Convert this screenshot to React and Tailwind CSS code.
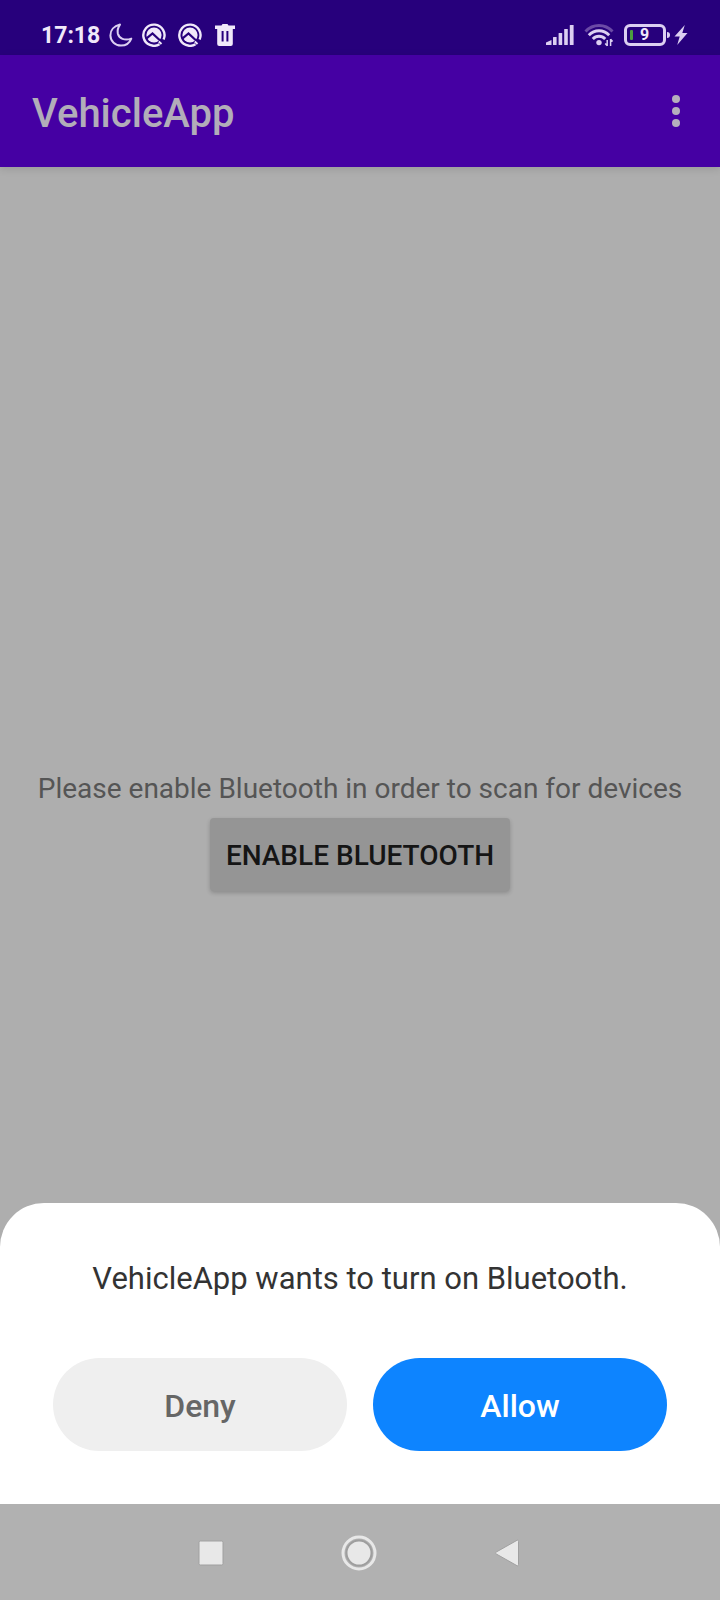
function Moon() {
  return (
    <svg viewBox="0 0 24 24" className="h-6 w-6" fill="none" stroke="#dccff2" strokeWidth="2" strokeLinejoin="round" aria-hidden="true">
      <path d="M11 1.600C4.800 3 1.300 7.500 1.400 12.500 1.600 18.500 6.200 22.600 12 22.600c4.800 0 8.600-2.600 10.300-7C15.500 18 10 15.500 8.800 10.500 8.200 7 9.200 4 11 1.600z" />
    </svg>
  );
}

function CircleBadge() {
  return (
    <svg viewBox="0 0 24 24" className="h-6 w-6" fill="none" aria-hidden="true">
      <path d="M17.500 21.200A10.600 10.600 0 1 1 21.600 16.500" stroke="#f0e8fa" strokeWidth="2.400" />
      <circle cx="12" cy="12" r="7.600" fill="#f0e8fa" />
      <path d="M4 15.800l6.500-5.300 9.500 8.700" stroke="#27007c" strokeWidth="2.200" />
      <path d="M16.800 18.500l2.700 2.500" stroke="#f0e8fa" strokeWidth="2" />
    </svg>
  );
}

function Trash() {
  return (
    <svg viewBox="0 0 22 24" className="h-6 w-[22px]" fill="#f0e8fa" aria-hidden="true">
      <path d="M1 2.500h6.500l1-1.500h5l1 1.500H21V6H1z" />
      <path fillRule="evenodd" d="M3.200 5h15.600v16a2 2 0 0 1-2 2H5.200a2 2 0 0 1-2-2zM7.600 8v10.500h2V8zM12.400 8v10.500h2V8z" />
    </svg>
  );
}

function Signal() {
  return (
    <svg viewBox="0 0 28 20" className="h-5 w-7" fill="#dccff2" aria-hidden="true">
      <path d="M0 20v-2.500L5.500 15v5z" />
      <rect x="7" y="12" width="3.600" height="8" rx="0.500" />
      <rect x="12.600" y="8" width="3.600" height="12" rx="0.500" />
      <rect x="18.200" y="4" width="3.600" height="16" rx="0.500" />
      <rect x="23.800" y="0" width="3.800" height="20" rx="0.500" />
    </svg>
  );
}

function Wifi() {
  return (
    <svg viewBox="0 0 30 24" className="h-6 w-[30px]" fill="none" strokeWidth="2.900" aria-hidden="true">
      <path d="M1.500 8.500C9 .5 21 .5 28.500 8.500" stroke="#6b4aa6" />
      <path d="M4.800 12.200c5.800-6 14.600-6 20.400 0M8.800 16c3.400-3.700 9-3.700 12.400 0" stroke="#dccff2" />
      <circle cx="15" cy="19.600" r="2.700" fill="#dccff2" />
      <path d="M23.200 17v6M26.600 16v7M21.200 20.500l2 2.300M28.600 18.500l-2-2.300" stroke="#dccff2" strokeWidth="1.500" />
    </svg>
  );
}

function Battery() {
  return (
    <div className="flex items-center gap-px">
      <div className="flex h-[22px] w-[42px] items-center rounded-md border-3 border-[#dccff2] px-[3px]">
        <span className="h-2.5 w-[3px] rounded-[1px] bg-[#4c9c3f]" />
        <span className="flex-1 pr-1 text-center text-[16px] leading-4 font-bold text-[#f0e8fa]">9</span>
      </div>
      <span className="h-1.5 w-[3px] rounded-r-sm bg-[#dccff2]" />
    </div>
  );
}

function Bolt() {
  return (
    <svg viewBox="0 0 14 20" className="h-5 w-3.5" fill="#dccff2" aria-hidden="true">
      <path d="M10.800 0L.5 11.600h5.200L3.200 20 13.500 8H8.300z" />
    </svg>
  );
}

function StatusBar() {
  return (
    <div className="flex h-[55px] items-center justify-between bg-[#27007c] pt-3.5 pr-8 pl-[41px] text-[#dccff2]">
      <div className="flex items-center gap-3">
        <div className="flex items-center gap-[9px]">
          <span className="pt-0.5 text-[23px] leading-8 font-bold text-[#f0e8fa]">17:18</span>
          <Moon />
          <CircleBadge />
        </div>
        <CircleBadge />
        <Trash />
      </div>
      <div className="flex items-center gap-2.5">
        <Signal />
        <Wifi />
        <div className="flex items-center gap-1">
          <Battery />
          <Bolt />
        </div>
      </div>
    </div>
  );
}

function AppBar() {
  return (
    <header className="relative flex h-28 items-center justify-between bg-[#4500a3] pr-6 pl-8 shadow-[0_2px_8px_rgba(0,0,0,0.12)]">
      <h1 className="pt-1.5 text-[40px] leading-[48px] font-medium text-[#b2adb9]">VehicleApp</h1>
      <button type="button" aria-label="More options" className="flex h-12 w-10 items-center justify-center">
        <svg viewBox="0 0 8 32" className="h-8 w-2" fill="#b5afbd" aria-hidden="true">
          <circle cx="4" cy="4" r="4" />
          <circle cx="4" cy="16" r="4" />
          <circle cx="4" cy="28" r="4" />
        </svg>
      </button>
    </header>
  );
}

function PermissionSheet() {
  return (
    <section role="dialog" aria-labelledby="sheet-title" className="absolute inset-x-0 bottom-0 rounded-t-[44px] bg-white px-[53px] pt-14 pb-[53px]">
      <h2 id="sheet-title" className="text-center text-[31px] leading-10 text-[#333333]">
        VehicleApp wants to turn on Bluetooth.
      </h2>
      <div className="mt-[59px] grid grid-cols-2 gap-[26px]">
        <button type="button" className="h-[93px] rounded-full bg-[#efefef] pt-0.5 text-[32px] font-medium text-[#666666]">
          Deny
        </button>
        <button type="button" className="h-[93px] rounded-full bg-[#0d84ff] pt-0.5 text-[32px] font-medium text-white">
          Allow
        </button>
      </div>
    </section>
  );
}

function NavBar() {
  return (
    <nav className="flex h-24 items-center justify-center gap-[108px] bg-[#b1b1b1] pt-px pr-0.5" aria-label="System">
      <button type="button" aria-label="Recent apps" className="flex h-12 w-10 items-center justify-center">
        <svg viewBox="0 0 26 26" className="h-[26px] w-[26px]" aria-hidden="true">
          <rect x="1" y="1" width="24" height="24" rx="1.500" fill="#e8e8e8" stroke="#a0a0a0" />
        </svg>
      </button>
      <button type="button" aria-label="Home" className="flex h-12 w-10 items-center justify-center">
        <svg viewBox="0 0 36 36" className="h-9 w-9" aria-hidden="true">
          <circle cx="18" cy="18" r="16" fill="#b1b1b1" stroke="#e8e8e8" strokeWidth="3" />
          <circle cx="18" cy="18" r="12.500" fill="#e8e8e8" stroke="#9e9e9e" strokeWidth="2" />
        </svg>
      </button>
      <button type="button" aria-label="Back" className="flex h-12 w-10 items-center justify-center">
        <svg viewBox="0 0 24 28" className="h-7 w-6" aria-hidden="true">
          <path d="M22 1.300c.9-.4 1.500 0 1.500 1v23.400c0 1-.6 1.400-1.500 1L1.300 15c-1-.6-1-1.400 0-2z" fill="#e8e8e8" stroke="#a0a0a0" />
        </svg>
      </button>
    </nav>
  );
}

export default function App() {
  return (
    <div className="flex min-h-screen flex-col bg-[#aeaeae] font-[Roboto,sans-serif]">
      <StatusBar />
      <AppBar />
      <main className="relative flex flex-1 flex-col items-center justify-center">
        <p className="text-center text-[28px] leading-[42px] text-[#555555]">
          Please enable Bluetooth in order to scan for devices
        </p>
        <button type="button" className="mt-2 mb-3 h-[73px] rounded bg-[#959595] px-4 pt-0.5 text-[28px] font-medium text-[#151515] shadow-[0_2px_4px_rgba(0,0,0,0.2)]">
          ENABLE BLUETOOTH
        </button>
        <PermissionSheet />
      </main>
      <NavBar />
    </div>
  );
}
